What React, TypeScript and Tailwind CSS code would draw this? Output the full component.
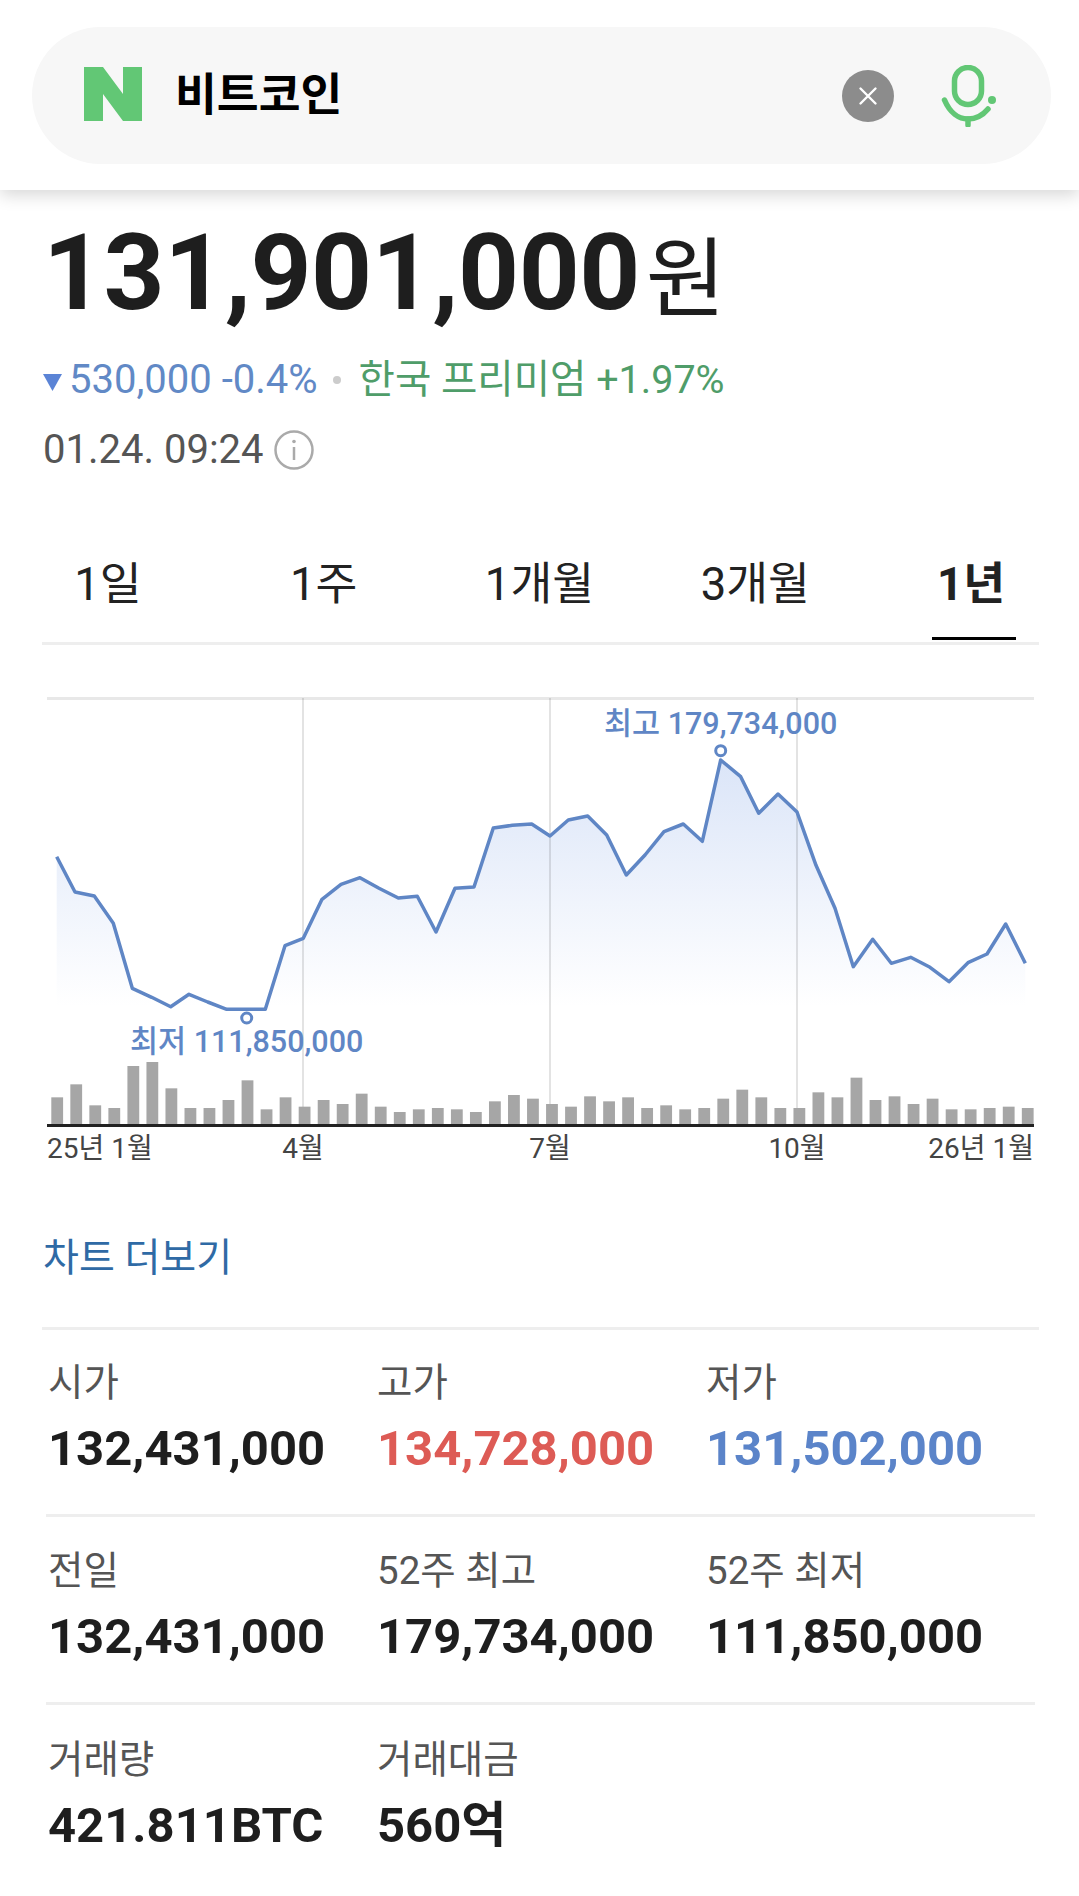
const linePoints: [number, number][] = [
  [56.7, 856.7], [75, 892], [94.3, 896], [113.3, 923.3], [132.3, 988.3], [151.7, 997.3], [170.7, 1006.7],
  [189, 994.3], [207.7, 1002], [226.7, 1009.3], [246, 1009.3], [265.3, 1009.3], [285, 945.7], [303.3, 938.3],
  [322, 899.3], [341, 884.3], [360, 877.7], [379, 888.3], [398.3, 898], [417.3, 896.3], [436, 932], [455, 888.3],
  [474, 887], [493.3, 828], [512.3, 825.3], [531.7, 824], [550, 836], [568.3, 820], [587.7, 816], [606.7, 835],
  [626.3, 875], [645, 855], [664, 831.7], [683.3, 824], [702.3, 841.3], [720.7, 760], [740.7, 776.7], [758.7, 813.3],
  [778, 794], [797, 812], [816, 865.3], [835, 908.3], [853.3, 966.7], [872.7, 939.3], [891.3, 963.3], [910.7, 957.3],
  [930, 967.3], [949, 981.7], [968, 962.7], [987, 954], [1005.7, 924], [1025.3, 963.3],
];

const barTops = [
  1252, 1213, 1276, 1284, 1158, 1146, 1225, 1284, 1284, 1260, 1201, 1288, 1252, 1280, 1260, 1272, 1241, 1280, 1296,
  1288, 1284, 1288, 1296, 1264, 1245, 1256, 1272, 1280, 1249, 1264, 1252, 1284, 1276, 1288, 1284, 1256, 1229, 1252,
  1284, 1284, 1237, 1252, 1193, 1260, 1249, 1272, 1256, 1288, 1288, 1284, 1280, 1284,
];

const linePath = linePoints.map(([x, y]) => `${x},${y}`).join(" ");
const areaPath = `56.7,1010 ${linePath} 1025.3,1010`;

function Chart() {
  return (
    <svg width="1000" height="480" viewBox="40 690 1000 480" className="block">
      <defs>
        <linearGradient id="area" gradientUnits="userSpaceOnUse" x1="0" y1="760" x2="0" y2="1006">
          <stop offset="0" stopColor="#dbe5f8" />
          <stop offset="1" stopColor="#ffffff" />
        </linearGradient>
      </defs>
      <polygon points={areaPath} fill="url(#area)" />
      <rect x="47" y="697" width="987" height="3" fill="#e8e8e8" />
      {[303, 550, 797].map((x) => (
        <rect key={x} x={x - 1} y="698" width="2" height="427" fill="#000000" fillOpacity="0.11" />
      ))}
      {barTops.map((top, i) => {
        const h = (1335 - top) / 3;
        return <rect key={i} x={51.3 + i * 19.03} y={1125 - h} width="11.8" height={h} fill="#a6a6a6" />;
      })}
      <rect x="47" y="1124" width="987" height="3" fill="#222222" />
      <polyline points={linePath} fill="none" stroke="#5f86c5" strokeWidth="3.5" strokeLinejoin="round" />
      <circle cx="246.7" cy="1018" r="5" fill="#ffffff" stroke="#5f86c5" strokeWidth="3" />
      <circle cx="720.7" cy="750.7" r="5" fill="#ffffff" stroke="#5f86c5" strokeWidth="3" />
      <text x="130" y="1052" fontSize="30.5" fontWeight="500" fill="#5f86c5">최저 111,850,000</text>
      <text x="604" y="734" fontSize="30.5" fontWeight="500" fill="#5f86c5">최고 179,734,000</text>
      <g fontSize="28" fill="#444444">
        <text x="47" y="1158">25년 1월</text>
        <text x="303" y="1158" textAnchor="middle">4월</text>
        <text x="550" y="1158" textAnchor="middle">7월</text>
        <text x="797" y="1158" textAnchor="middle">10월</text>
        <text x="1034" y="1158" textAnchor="end">26년 1월</text>
      </g>
    </svg>
  );
}

function Cell({ label, value, color = "text-[#1e1e1e]" }: { label: string; value: string; color?: string }) {
  return (
    <div>
      <div className="h-[40px] text-[38.5px] leading-[40px] text-[#555555]">{label}</div>
      <div className={`mt-[19px] h-[54px] text-[49px] font-bold leading-[54px] ${color}`}>{value}</div>
    </div>
  );
}

export default function App() {
  return (
    <div className="h-[1896px] w-[1079px] overflow-hidden bg-white font-[Roboto,'Noto_Sans_CJK_KR',sans-serif] text-[#1e1e1e]">
      <header className="relative z-10 h-[190px] bg-white px-[32px] pt-[27px] shadow-[0_5px_16px_rgba(0,0,0,0.16)]">
        <div className="flex h-[137px] w-[1019px] items-center rounded-full bg-[#f7f7f7] pl-[52px] pr-[54px]">
          <svg width="58" height="54" viewBox="0 0 58 54" className="mb-[3px] shrink-0">
            <path d="M0 0H19L39 27V0H58V54H39L19 27V54H0Z" fill="#62c775" />
          </svg>
          <span className="ml-[33px] text-[45.5px] font-bold leading-none text-black">비트코인</span>
          <div className="ml-auto flex items-center gap-[47px]">
            <div className="flex h-[52px] w-[52px] items-center justify-center rounded-full bg-[#8c8c8c]">
              <svg width="20" height="20" viewBox="0 0 20 20">
                <path d="M2.5 2.5L17.5 17.5M17.5 2.5L2.5 17.5" stroke="#fff" strokeWidth="2.4" strokeLinecap="round" />
              </svg>
            </div>
            <svg width="56" height="62" viewBox="0 0 56 62" fill="none">
              <rect x="13.5" y="2.5" width="27" height="37" rx="13.5" stroke="#62c775" strokeWidth="5.5" />
              <path d="M3.5 35C9 48 18 54 27 54C35 54 42 50 47 44" stroke="#62c775" strokeWidth="5.5" strokeLinecap="round" />
              <path d="M27 54V60" stroke="#62c775" strokeWidth="5.5" strokeLinecap="round" />
              <circle cx="51" cy="35" r="4" fill="#62c775" />
            </svg>
          </div>
        </div>
      </header>

      <main className="pl-[42px] pr-[40px]">
        <div className="flex h-[150px] items-center pl-[1px] pt-[16px]">
          <span className="text-[106.5px] font-bold leading-none tracking-[-0.5px]">131,901,000</span>
          <span className="ml-[6px] pt-[14px] text-[87px] leading-none">원</span>
        </div>

        <div className="flex h-[80px] items-center text-[40px] leading-none">
          <svg width="19" height="17" viewBox="0 0 19 17" className="ml-[1px] mt-[5px] shrink-0">
            <path d="M0 0H19L9.5 17Z" fill="#5b84d6" />
          </svg>
          <span className="ml-[7px] text-[#6189c6]">530,000 -0.4%</span>
          <span className="ml-[15px] h-[8px] w-[8px] rounded-full bg-[#cccccc]" />
          <span className="ml-[18px] text-[39.5px] text-[#4f9d69]">한국 프리미엄 +1.97%</span>
        </div>

        <div className="flex h-[60px] items-center text-[40px] leading-none text-[#555555]">
          <span className="ml-[1px]">01.24. 09:24</span>
          <svg width="40" height="40" viewBox="0 0 40 40" fill="none" className="ml-[10px]">
            <circle cx="20" cy="20" r="18.5" stroke="#aaaaaa" strokeWidth="2.5" />
            <path d="M20 17V30" stroke="#aaaaaa" strokeWidth="2.5" />
            <circle cx="20" cy="11.5" r="1.8" fill="#aaaaaa" />
          </svg>
        </div>

        <nav className="relative -ml-[42px] -mr-[40px] mt-[46px] grid h-[116px] w-[1079px] grid-cols-5 items-center pt-[2px] text-center text-[45.5px] leading-none text-[#222222]">
          <span>1일</span>
          <span>1주</span>
          <span>1개월</span>
          <span>3개월</span>
          <span className="font-bold">
            1년
            <span className="absolute bottom-[2px] right-[63px] h-[3px] w-[84px] bg-black" />
          </span>
        </nav>
        <div className="h-[3px] bg-[#eeeeee]" />

        <div className="-ml-[2px] mt-[45px]">
          <Chart />
        </div>

        <a className="block h-[157px] pl-[1px] pt-[64px] text-[39px] leading-[48px] text-[#2f6aa5]">차트 더보기</a>

        <section>
          <div className="h-[187px] border-t-[3px] border-[#eeeeee] pl-[6px] pt-[33px]">
            <div className="grid grid-cols-[329px_329px_1fr]">
              <Cell label="시가" value="132,431,000" />
              <Cell label="고가" value="134,728,000" color="text-[#dd5b55]" />
              <Cell label="저가" value="131,502,000" color="text-[#5b84c9]" />
            </div>
          </div>
          <div className="mx-[4px] h-[188px] border-t-[3px] border-[#eeeeee] pl-[2px] pt-[34px]">
            <div className="grid grid-cols-[329px_329px_1fr]">
              <Cell label="전일" value="132,431,000" />
              <Cell label="52주 최고" value="179,734,000" />
              <Cell label="52주 최저" value="111,850,000" />
            </div>
          </div>
          <div className="mx-[4px] h-[188px] border-t-[3px] border-[#eeeeee] pl-[2px] pt-[35px]">
            <div className="grid grid-cols-[329px_329px_1fr]">
              <Cell label="거래량" value="421.811BTC" />
              <Cell label="거래대금" value="560억" />
            </div>
          </div>
        </section>
      </main>
    </div>
  );
}
